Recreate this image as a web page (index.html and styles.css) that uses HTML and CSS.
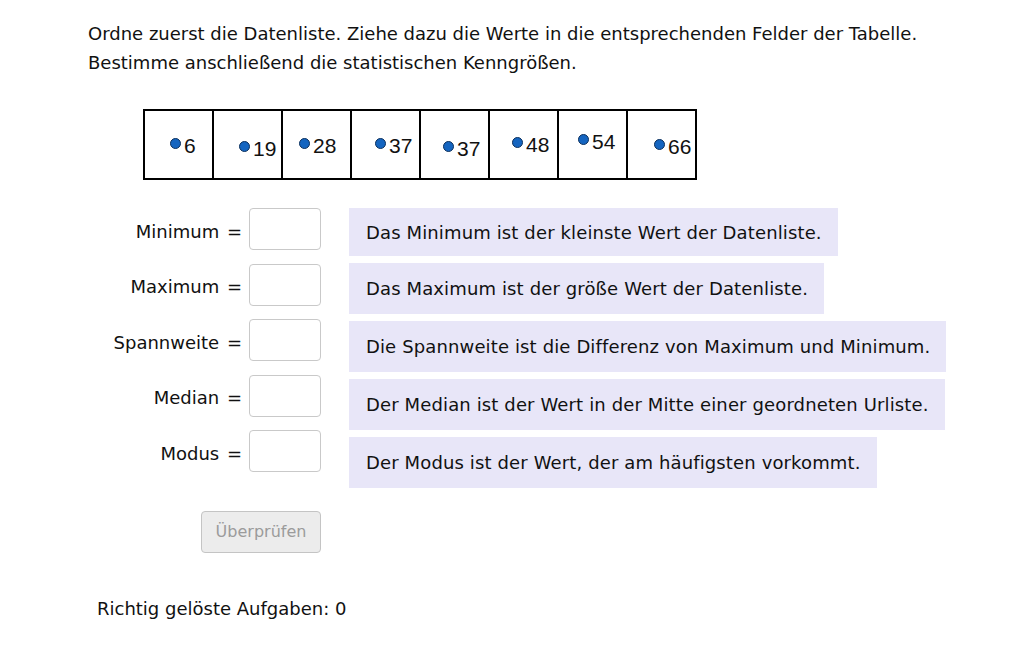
FILE: index.html
```html
<!DOCTYPE html>
<html lang="de">
<head>
    <meta charset="UTF-8">
    <meta name="viewport" content="width=device-width, initial-scale=1.0">
    <title>Statistische Kenngrößen</title>
    <link rel="stylesheet" href="styles.css">
</head>
<body>
    <div class="applet">
        <p class="intro">
            Ordne zuerst die Datenliste. Ziehe dazu die Werte in die entsprechenden Felder der Tabelle.<br>
            Bestimme anschließend die statistischen Kenngrößen.
        </p>

        <div class="board">
            <div class="cells">
                <div class="cell"></div>
                <div class="cell"></div>
                <div class="cell"></div>
                <div class="cell"></div>
                <div class="cell"></div>
                <div class="cell"></div>
                <div class="cell"></div>
                <div class="cell"></div>
            </div>
            <!-- ziehbare Punkte, Lage = Position auf der Zeichenfläche -->
            <div class="pt" style="left:27px;top:29px"><span class="dot"></span><span class="val">6</span></div>
            <div class="pt" style="left:96px;top:32px"><span class="dot"></span><span class="val">19</span></div>
            <div class="pt" style="left:156px;top:29px"><span class="dot"></span><span class="val">28</span></div>
            <div class="pt" style="left:232px;top:29px"><span class="dot"></span><span class="val">37</span></div>
            <div class="pt" style="left:300px;top:32px"><span class="dot"></span><span class="val">37</span></div>
            <div class="pt" style="left:369px;top:28px"><span class="dot"></span><span class="val">48</span></div>
            <div class="pt" style="left:435px;top:25px"><span class="dot"></span><span class="val">54</span></div>
            <div class="pt" style="left:511px;top:30px"><span class="dot"></span><span class="val">66</span></div>
        </div>

        <div class="stats">
            <div class="fields">
                <div class="field"><label>Minimum <span class="eq">=</span></label><input type="text"></div>
                <div class="field"><label>Maximum <span class="eq">=</span></label><input type="text"></div>
                <div class="field"><label>Spannweite <span class="eq">=</span></label><input type="text"></div>
                <div class="field"><label>Median <span class="eq">=</span></label><input type="text"></div>
                <div class="field"><label>Modus <span class="eq">=</span></label><input type="text"></div>
                <button class="check" disabled>Überprüfen</button>
            </div>
            <div class="notes">
                <div class="note">Das Minimum ist der kleinste Wert der Datenliste.</div>
                <div class="note">Das Maximum ist der größe Wert der Datenliste.</div>
                <div class="note">Die Spannweite ist die Differenz von Maximum und Minimum.</div>
                <div class="note">Der Median ist der Wert in der Mitte einer geordneten Urliste.</div>
                <div class="note">Der Modus ist der Wert, der am häufigsten vorkommt.</div>
            </div>
        </div>

        <p class="score">Richtig gelöste Aufgaben: 0</p>
    </div>
</body>
</html>
```

FILE: styles.css
```css
body{
    margin: 0;
    background: #fff;
    color: #111;
    font-family: "DejaVu Sans", "Liberation Sans", sans-serif;
    font-size: 18px;
}
p{
    margin: 0;
}
.applet{
    width: 1032px;
    height: 645px;
    overflow: hidden;
}
.intro{
    padding: 19px 0 0 88px;
    line-height: 29px;
}
.board{
    position: relative;
    width: 554px;
    margin: 32px 0 0 143px;
}
.cells{
    display: flex;
    border-left: 2px solid #000;
}
.cell{
    width: 67px;
    height: 67px;
    border: 2px solid #000;
    border-left: none;
}
.pt{
    position: absolute;
    display: flex;
    align-items: flex-start;
}
.dot{
    width: 9px;
    height: 9px;
    border-radius: 50%;
    background: #1565c0;
    border: 1px solid #0b2f5c;
    margin-right: 3px;
}
.val{
    font-family: "Liberation Sans", sans-serif;
    font-size: 21px;
    line-height: 21px;
    margin-top: -3px;
}
.stats{
    display: flex;
    align-items: flex-start;
    margin-top: 28px;
}
.fields{
    display: flex;
    flex-direction: column;
    gap: 13.5px;
    width: 321px;
}
.field{
    display: flex;
    align-items: center;
    justify-content: flex-end;
    height: 42px;
}
.field label{
    margin-right: 7px;
    padding-top: 4px;
}
.eq{
    margin-left: 2px;
}
.field input{
    box-sizing: border-box;
    width: 72px;
    height: 42px;
    border: 1px solid #c9c9c9;
    border-radius: 4px;
    background: #fff;
    font: inherit;
}
.check{
    align-self: flex-end;
    box-sizing: border-box;
    width: 120px;
    height: 42px;
    margin-top: 25px;
    border: 1px solid #c4c4c4;
    border-radius: 4px;
    background: #ececec;
    color: #9b9b9b;
    font: inherit;
    font-size: 16px;
}
.notes{
    display: flex;
    flex-direction: column;
    align-items: flex-start;
    gap: 7px;
    margin-left: 28px;
}
.note{
    display: flex;
    align-items: center;
    height: 51px;
    padding: 0 16px 0 17px;
    background: #e8e6f8;
    letter-spacing: 0.13px;
}
.note:first-child{
    height: 48px;
}
.score{
    margin: 44px 0 0 97px;
    line-height: 24px;
}
```
